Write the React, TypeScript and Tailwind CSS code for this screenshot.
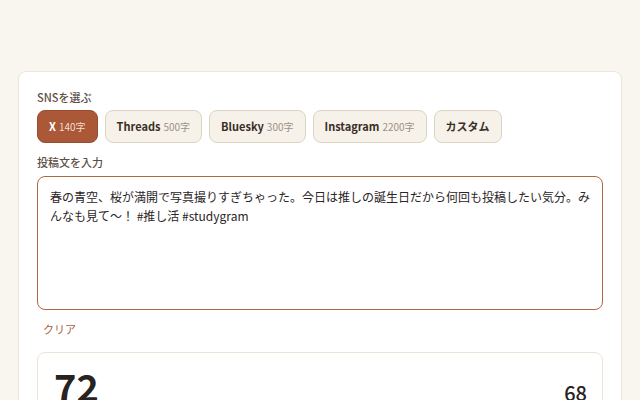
import { useState } from "react";

const platforms = [
  { name: "X", limit: "140字" },
  { name: "Threads", limit: "500字" },
  { name: "Bluesky", limit: "300字" },
  { name: "Instagram", limit: "2200字" },
  { name: "カスタム", limit: "" },
];

const initialText =
  "春の青空、桜が満開で写真撮りすぎちゃった。今日は推しの誕生日だから何回も投稿したい気分。みんなも見て〜！ #推し活 #studygram";

const App = () => {
  const [active, setActive] = useState("X");
  const [text, setText] = useState(initialText);

  return (
    <div className="min-h-screen bg-[#f9f6f0] px-[18px] pt-[71px] font-['Noto_Sans_CJK_JP',sans-serif] text-[#2b241f]">
      <div className="rounded-t-lg border border-[#ece5da] bg-white px-[18px] pt-[17px] pb-6">
        <div className="text-[11px] font-medium text-[#5e5045]">SNSを選ぶ</div>

        <div className="mt-[4px] flex gap-[7px]">
          {platforms.map((p) => {
            const on = p.name === active;
            return (
              <button
                key={p.name}
                onClick={() => setActive(p.name)}
                className={
                  on
                    ? "flex h-[33px] items-center gap-[3px] rounded-lg border border-[#9a4c31] bg-[#aa5838] px-[11px] text-[11px] font-bold text-white"
                    : "flex h-[33px] items-center gap-[3px] rounded-lg border border-[#ddd3c1] bg-[#f6f2ea] px-[11px] text-[11px] font-bold text-[#3a2f27]"
                }
              >
                <span>{p.name}</span>
                {p.limit && (
                  <span className={on ? "text-[10px] font-normal text-[#f3dccf]" : "text-[10px] font-normal text-[#9c9186]"}>
                    {p.limit}
                  </span>
                )}
              </button>
            );
          })}
        </div>

        <div className="mt-[11px] text-[11px] font-medium text-[#5e5045]">投稿文を入力</div>

        <textarea
          value={text}
          onChange={(e) => setText(e.target.value)}
          className="mt-[6px] block h-[134px] w-full resize-none rounded-lg border-[1.5px] border-[#b0663f] px-3 py-[10px] text-[12px] leading-[19px] text-[#2b241f] outline-none"
        />

        <button onClick={() => setText("")} className="mt-[11px] px-[6px] text-[11px] text-[#a5633f]">
          クリア
        </button>

        <div className="mt-[13px] flex h-[80px] items-start justify-between rounded-lg border border-[#ece4d6] pl-4 pr-[15px] pt-[14px]">
          <div className="text-[38px] leading-none font-bold text-[#29231f]">72</div>
          <div className="mt-[16px] text-[20px] leading-none font-medium text-[#29231f]">68</div>
        </div>
      </div>
    </div>
  );
};

export default App;
